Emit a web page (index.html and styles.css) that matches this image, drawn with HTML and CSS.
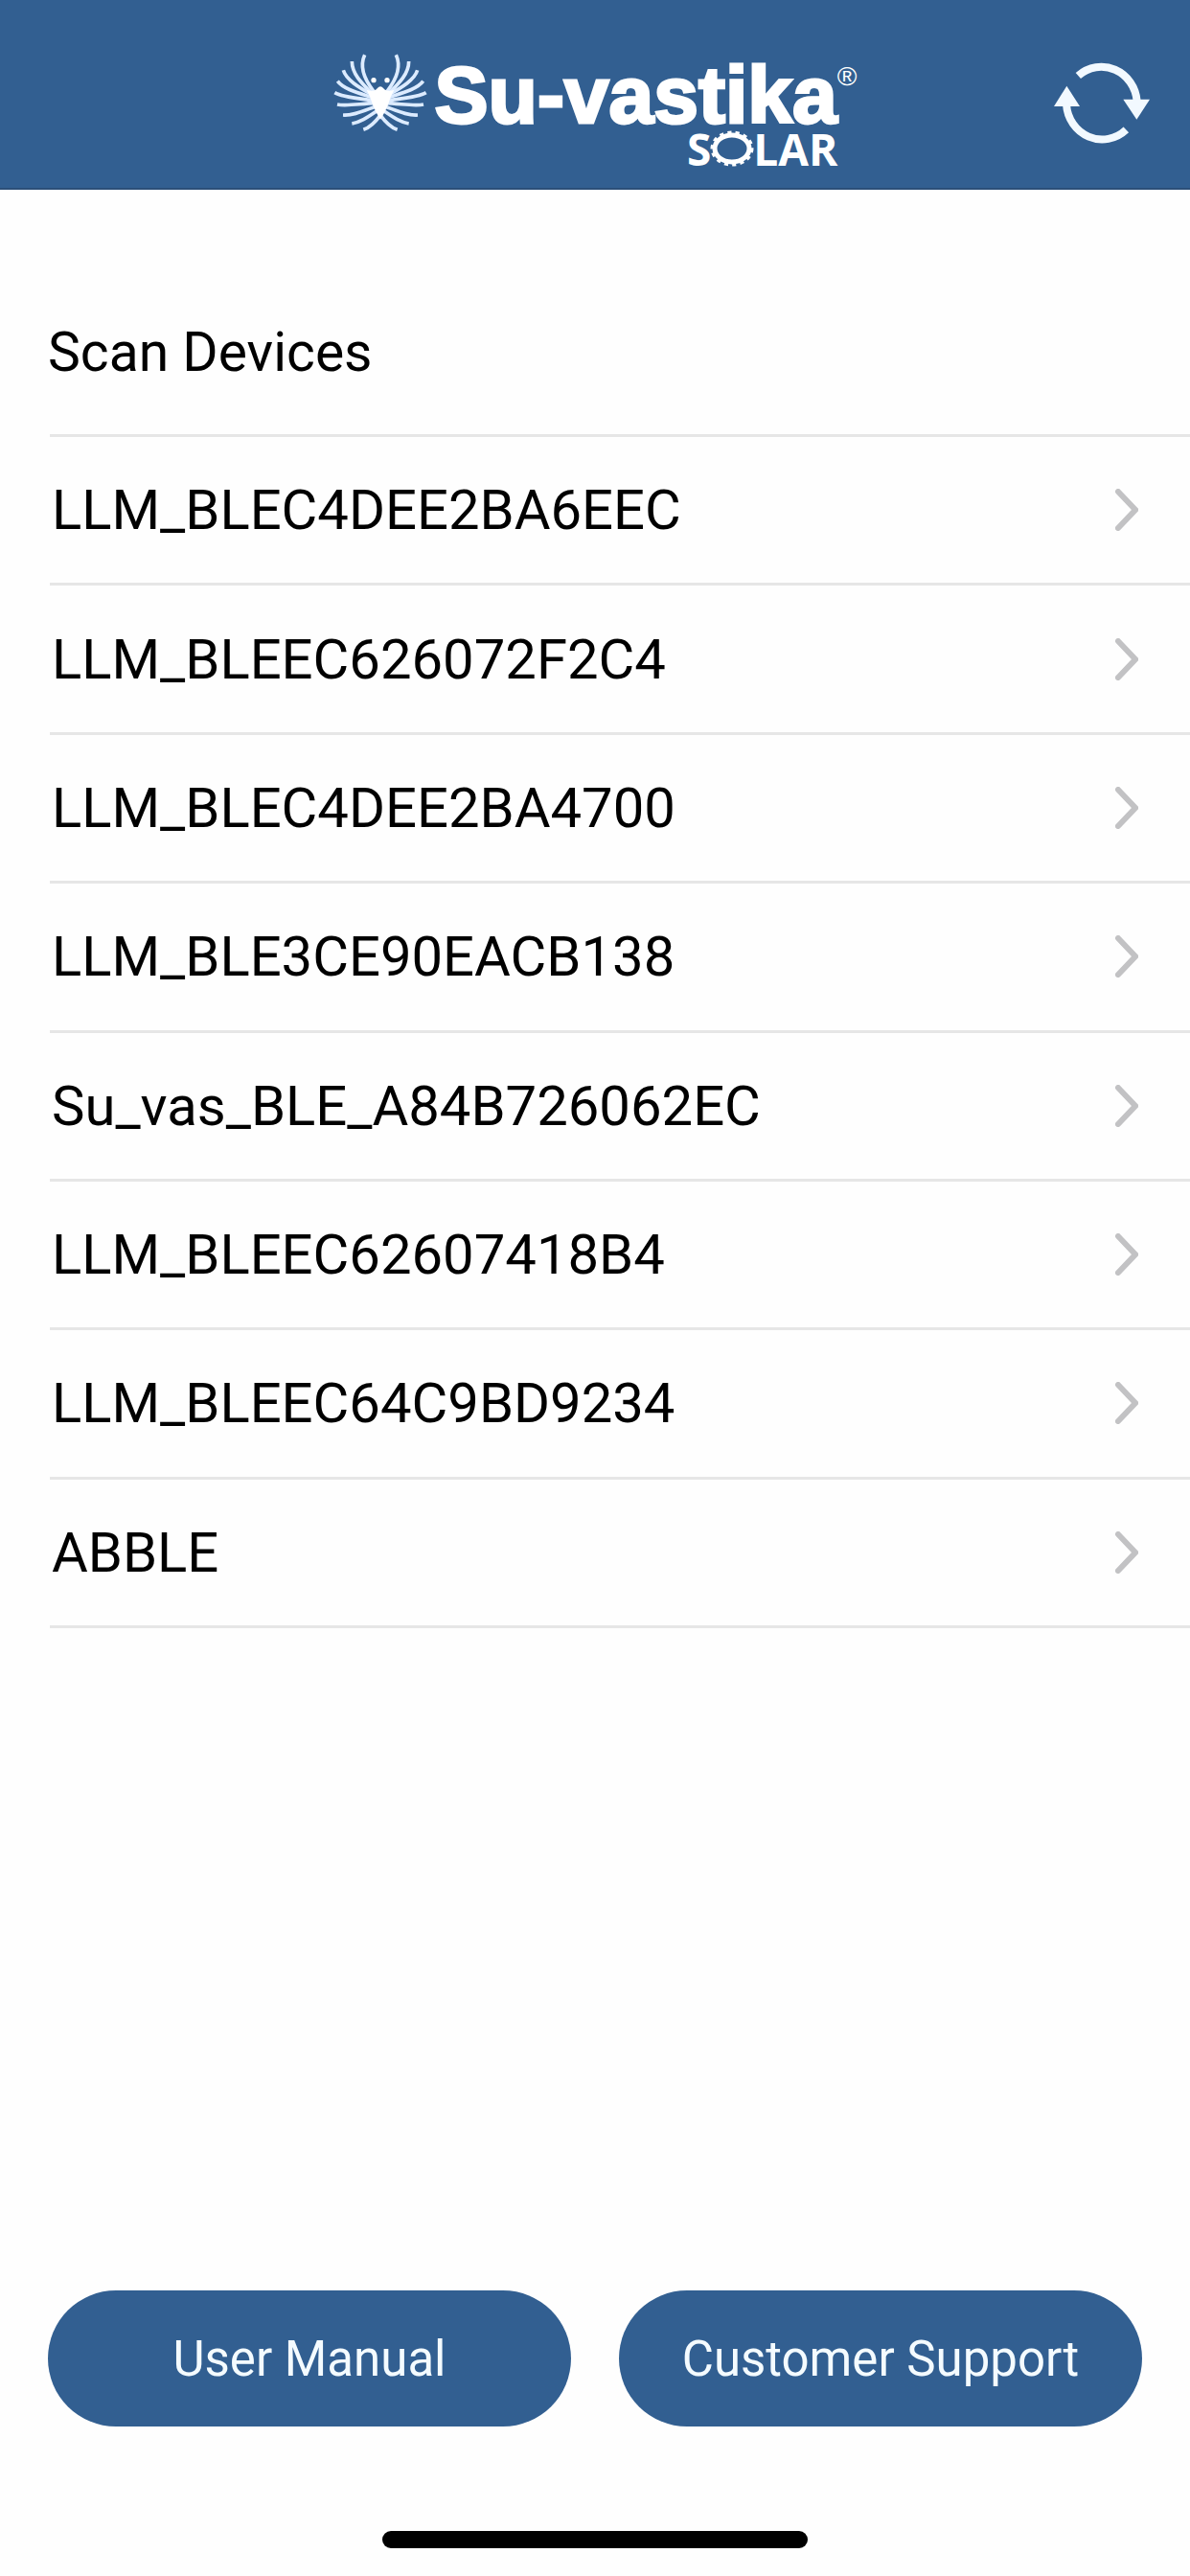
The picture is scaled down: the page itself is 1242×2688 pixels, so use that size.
FILE: index.html
```html
<!DOCTYPE html>
<html lang="en">
<head>
<meta charset="utf-8">
<meta name="viewport" content="width=device-width, initial-scale=1">
<title>Scan Devices</title>
<link rel="stylesheet" href="styles.css">
</head>
<body>
  <header class="topbar">
    <div class="logo">
      <svg class="bird" viewBox="54 72 294 252" aria-hidden="true">
        <g id="wing">
          <path d="M152 82 C138 112 144 150 180 196"/>
          <path d="M112 102 C112 140 140 168 174 202"/>
          <path d="M85 130 C94 160 134 184 174 206"/>
          <path d="M67 164 C86 190 136 202 178 216"/>
          <path d="M58 200 C85 216 138 218 182 225"/>
          <path d="M66 237 C95 243 140 234 186 233"/>
          <path d="M84 270 C118 272 150 256 190 242"/>
          <path d="M112 297 C142 292 165 274 195 254"/>
          <path d="M148 316 C172 308 187 290 203 268"/>
        </g>
        <use href="#wing" transform="translate(402 0) scale(-1 1)"/>
        <path class="solid" d="M158 192 Q184 198 191 187 Q201 174 211 187 Q218 198 244 192 Q232 212 225 238 Q216 262 201 284 Q186 262 177 238 Q170 212 158 192 Z"/>
        <circle class="solid" cx="180" cy="161" r="8"/>
        <circle class="solid" cx="222" cy="161" r="8"/>
      </svg>
      <div class="wordmark">
        <div class="brand">Su-vastika<span class="reg">®</span></div>
        <div class="solar">S<svg class="sun" viewBox="0 0 44 38" aria-hidden="true">
            <ellipse class="rays" cx="22" cy="17" rx="20" ry="16"/>
            <ellipse class="ring" cx="22" cy="17" rx="18" ry="14"/>
          </svg>LAR</div>
      </div>
    </div>
    <button type="button" class="refresh" aria-label="Refresh">
      <svg viewBox="117 70 300 264" aria-hidden="true">
        <path class="arc" d="M193 118 A112 117 0 0 1 377 198"/>
        <path class="arc" d="M343 287 A112 117 0 0 1 156 208"/>
        <path class="head" d="M334 192 H417 L376 255 Z"/>
        <path class="head" d="M117 214 H198 L157 150 Z"/>
      </svg>
    </button>
  </header>

  <main>
    <h1>Scan Devices</h1>
    <ul class="devices">
      <li><a href="#">LLM_BLEC4DEE2BA6EEC <svg class="chevron" viewBox="0 0 24 44"><path d="M3 3 L21 22 L3 41"/></svg></a></li>
      <li><a href="#">LLM_BLEEC626072F2C4 <svg class="chevron" viewBox="0 0 24 44"><path d="M3 3 L21 22 L3 41"/></svg></a></li>
      <li><a href="#">LLM_BLEC4DEE2BA4700 <svg class="chevron" viewBox="0 0 24 44"><path d="M3 3 L21 22 L3 41"/></svg></a></li>
      <li><a href="#">LLM_BLE3CE90EACB138 <svg class="chevron" viewBox="0 0 24 44"><path d="M3 3 L21 22 L3 41"/></svg></a></li>
      <li><a href="#">Su_vas_BLE_A84B726062EC <svg class="chevron" viewBox="0 0 24 44"><path d="M3 3 L21 22 L3 41"/></svg></a></li>
      <li><a href="#">LLM_BLEEC62607418B4 <svg class="chevron" viewBox="0 0 24 44"><path d="M3 3 L21 22 L3 41"/></svg></a></li>
      <li><a href="#">LLM_BLEEC64C9BD9234 <svg class="chevron" viewBox="0 0 24 44"><path d="M3 3 L21 22 L3 41"/></svg></a></li>
      <li><a href="#">ABBLE <svg class="chevron" viewBox="0 0 24 44"><path d="M3 3 L21 22 L3 41"/></svg></a></li>
    </ul>
  </main>

  <footer>
    <div class="actions">
      <button type="button">User Manual</button>
      <button type="button">Customer Support</button>
    </div>
    <div class="home-bar"></div>
  </footer>
</body>
</html>
```
FILE: styles.css
```css
* {
  box-sizing: border-box;
}

body {
  margin: 0;
  min-height: 100vh;
  display: flex;
  flex-direction: column;
  background-color: #fefefe;
  color: #000;
  font-family: Roboto, "Liberation Sans", sans-serif;
}

button {
  border: none;
  cursor: pointer;
  font-family: inherit;
}

/* header */
.topbar {
  display: grid;
  grid-template-columns: 1fr auto 1fr;
  align-items: start;
  padding: 54px 42px 20px;
  background-color: #325f91;
  border-bottom: 2px solid #2c4f79;
  color: #fff;
}

.logo {
  grid-column: 2;
  display: flex;
  gap: 8px;
}

.bird {
  width: 98px;
  height: 84px;
  fill: none;
  stroke: #dcebff;
  stroke-width: 11;
}

.bird .solid {
  fill: #fff;
  stroke: none;
}

.wordmark {
  padding-top: 6px;
}

.brand {
  display: flex;
  font-family: "Liberation Sans", sans-serif;
  font-size: 84px;
  font-weight: bold;
  line-height: 78px;
  -webkit-text-stroke: 3px #fff;
}

.reg {
  font-size: 28px;
  font-weight: normal;
  line-height: 40px;
  -webkit-text-stroke: 0;
}

.solar {
  display: flex;
  justify-content: flex-end;
  padding-right: 20px;
  font-family: "Open Sans", sans-serif;
  font-size: 46px;
  font-weight: bold;
  line-height: 34px;
}

.sun {
  width: 44px;
  height: 38px;
  overflow: visible;
  fill: none;
  stroke: #fff;
}

.sun .ring {
  stroke-width: 5;
}

.sun .rays {
  stroke-width: 5;
  stroke-dasharray: 4 4;
}

.refresh {
  justify-self: end;
  margin-top: 9px;
  padding: 0;
  background: none;
}

.refresh svg {
  display: block;
  width: 100px;
  height: 88px;
}

.refresh .arc {
  fill: none;
  stroke: #f2f9ff;
  stroke-width: 24;
}

.refresh .head {
  fill: #f2f9ff;
}

/* device list */
h1 {
  margin: 0;
  padding: 138px 50px 53px;
  font-size: 57px;
  font-weight: normal;
  line-height: 64px;
}

.devices {
  display: grid;
  grid-auto-rows: 1fr;
  min-height: 1246px;
  margin: 0 0 0 52px;
  padding: 0;
  list-style: none;
  border-top: 3px solid #e6e6e6;
}

.devices li {
  border-bottom: 3px solid #e6e6e6;
}

.devices a {
  display: flex;
  align-items: center;
  justify-content: space-between;
  height: 100%;
  padding: 0 54px 0 2px;
  color: inherit;
  font-size: 58px;
  text-decoration: none;
}

.chevron {
  width: 24px;
  height: 44px;
  fill: none;
  stroke: #c2c2c4;
  stroke-width: 6;
  stroke-linecap: round;
}

/* bottom buttons */
footer {
  margin-top: auto;
  padding: 0 50px 29px;
}

.actions {
  display: grid;
  grid-template-columns: 1fr 1fr;
  gap: 50px;
}

.actions button {
  height: 142px;
  border-radius: 71px;
  background-color: #325f91;
  color: #f4fbff;
  font-size: 51px;
}

.home-bar {
  width: 444px;
  height: 18px;
  margin: 109px auto 0;
  border-radius: 9px;
  background-color: #000;
}
```
